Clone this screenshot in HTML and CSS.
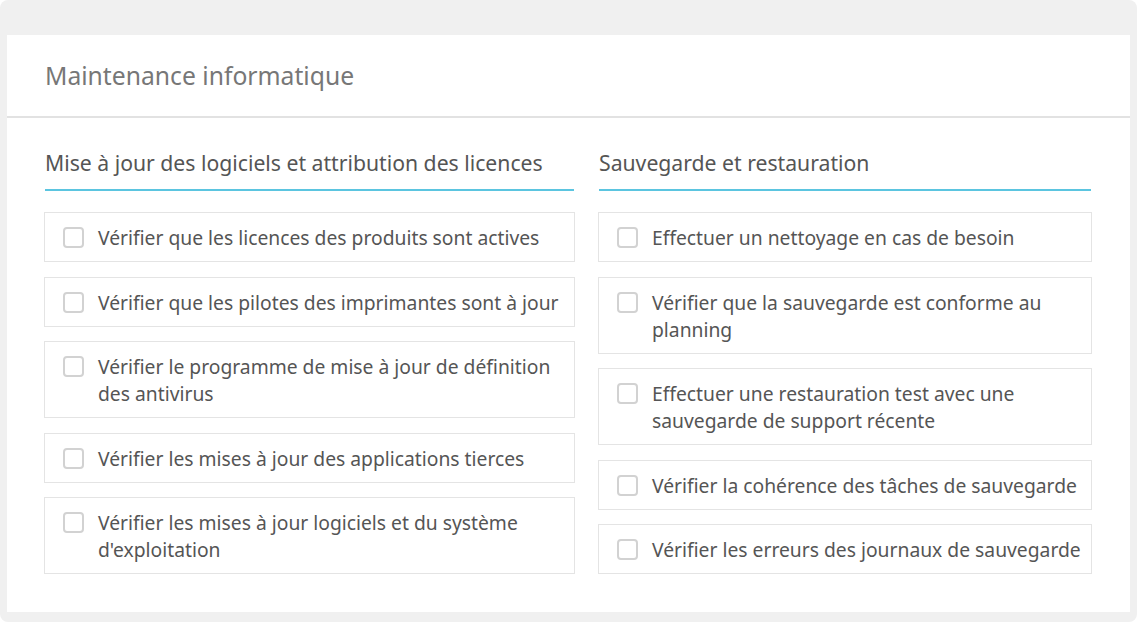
FILE: index.html
```html
<!DOCTYPE html>
<html lang="fr">
<head>
<meta charset="utf-8">
<title>Maintenance informatique</title>
<link rel="stylesheet" href="styles.css">
</head>
<body>
<div class="page">
  <div class="card">
    <div class="card-header">Maintenance informatique</div>
    <div class="card-body">
      <div class="col">
        <h3 class="section-title">Mise à jour des logiciels et attribution des licences</h3>
        <ul class="tasks">
          <li class="task"><span class="box"></span><span class="label">Vérifier que les licences des produits sont actives</span></li>
          <li class="task"><span class="box"></span><span class="label">Vérifier que les pilotes des imprimantes sont à jour</span></li>
          <li class="task"><span class="box"></span><span class="label">Vérifier le programme de mise à jour de définition des antivirus</span></li>
          <li class="task"><span class="box"></span><span class="label">Vérifier les mises à jour des applications tierces</span></li>
          <li class="task"><span class="box"></span><span class="label">Vérifier les mises à jour logiciels et du système d'exploitation</span></li>
        </ul>
      </div>
      <div class="col">
        <h3 class="section-title">Sauvegarde et restauration</h3>
        <ul class="tasks">
          <li class="task"><span class="box"></span><span class="label">Effectuer un nettoyage en cas de besoin</span></li>
          <li class="task"><span class="box"></span><span class="label">Vérifier que la sauvegarde est conforme au planning</span></li>
          <li class="task"><span class="box"></span><span class="label">Effectuer une restauration test avec une sauvegarde de support récente</span></li>
          <li class="task"><span class="box"></span><span class="label">Vérifier la cohérence des tâches de sauvegarde</span></li>
          <li class="task"><span class="box"></span><span class="label">Vérifier les erreurs des journaux de sauvegarde</span></li>
        </ul>
      </div>
    </div>
  </div>
</div>
</body>
</html>
```

FILE: styles.css
```css
* { box-sizing: border-box; }
html, body { margin: 0; padding: 0; background: #ffffff; }
body {
  font-family: "Noto Sans", "Open Sans", sans-serif;
  color: #555;
}
.page {
  width: 1137px;
  height: 622px;
  background: #f0f0f0;
  border-radius: 8px;
  padding: 35px 7px 10px 7px;
}
.card {
  background: #fff;
  height: 577px;
}
.card-header {
  font-size: 24.7px;
  line-height: 30px;
  color: #777;
  padding: 26px 38px 25px 38px;
  border-bottom: 2px solid #e2e2e2;
}
.card-body {
  display: grid;
  grid-template-columns: 531fr 494fr;
  column-gap: 23px;
  padding: 31px 38px 0 37px;
}
.section-title {
  margin: 0 1px;
  font-weight: 400;
  font-size: 21.2px;
  line-height: 27px;
  color: #555;
  padding-bottom: 13px;
  border-bottom: 2px solid #5bc5e0;
}
.tasks {
  list-style: none;
  margin: 21px 0 0 0;
  padding: 0;
  display: flex;
  flex-direction: column;
  gap: 14.5px;
}
.task {
  display: flex;
  align-items: flex-start;
  border: 1px solid #e4e4e4;
  padding: 11px 3px 10px 18px;
  font-size: 19.3px;
  line-height: 27px;
  color: #555;
}
.box {
  flex: none;
  width: 21px;
  height: 21px;
  border: 2px solid #d2d2d2;
  border-radius: 4px;
  margin-top: 3px;
  margin-right: 14px;
  background: #fff;
}
.label { flex: 1; }
```
